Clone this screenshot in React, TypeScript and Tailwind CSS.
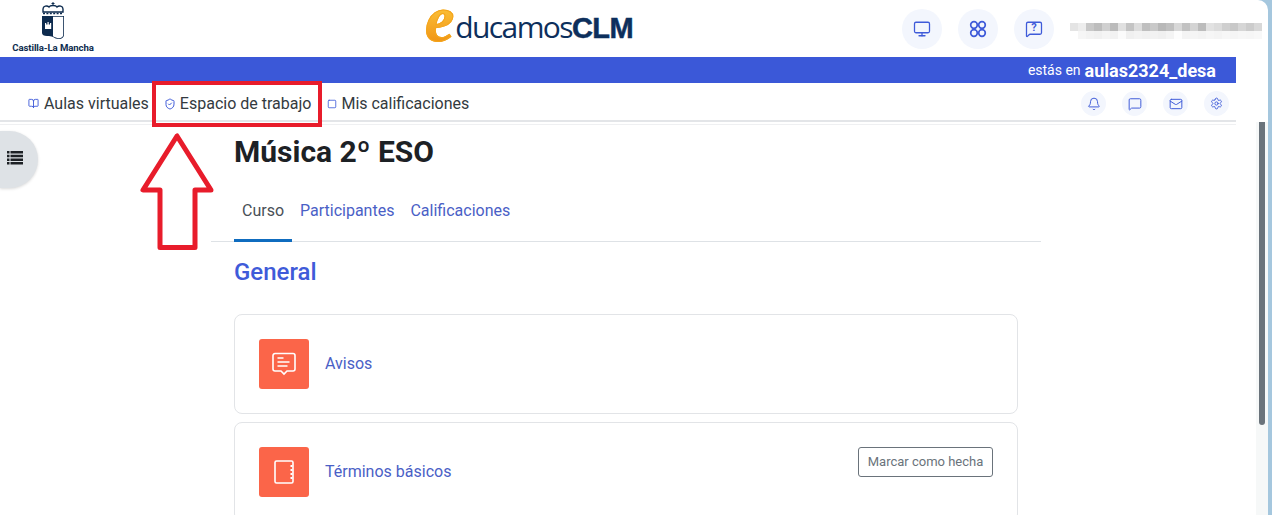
import React from 'react';
import { Bell, BookOpen, Mail, MessageSquare, Monitor, Settings, ShieldCheck, Square } from 'lucide-react';

const blurTop = ['#e4e4e4', '#ededed', '#c8c8c8', '#bdbdbd', '#d0d0d0', '#bbbbbb', '#e0e0e0', '#c4c4c4', '#dddddd', '#bfbfbf', '#c9c9c9', '#b8b8b8', '#c0c0c0', '#d8d8d8', '#c2c2c2', '#d4d4d4', '#bcbcbc', '#e2e2e2', '#dcdcdc', '#cfcfcf', '#c8c8c8', '#d6d6d6', '#cccccc', '#d8d8d8'];
const blurBottom = ['#f6f6f6', '#f3f3f3', '#f1f1f1', '#f5f5f5', '#f2f2f2', '#fbfbfb', '#f0f0f0', '#f3f3f3', '#f1f1f1', '#f2f2f2', '#f0f0f0', '#f4f4f4', '#fdfdfd', '#f4f4f4', '#f5f5f5', '#f3f3f3', '#f6f6f6', '#f4f4f4', '#f7f7f7', '#f5f5f5', '#f7f7f7', '#f6f6f6', '#f8f8f8'];

const CoatOfArms = () => <svg width="30" height="40" viewBox="0 0 30 40" fill="none">
    <path d="M15 0v3M13.5 1.5h3" stroke="#0d2b4e" strokeWidth="1" />
    <path d="M5 7c0-3 4-4 6-2 1-2 7-2 8 0 2-2 6-1 6 2v3H5z" fill="#fff" stroke="#0d2b4e" strokeWidth="1.4" />
    <path d="M5 11.5h20" stroke="#0d2b4e" strokeWidth="1.6" strokeDasharray="2 1.4" />
    <path d="M4 14h22v19c0 2-2 4-5 4-3 0-4-1-6-2-2-1-3-1-6-1-3 0-5-1-5-3z" fill="#0d2b4e" />
    <path d="M15 14.8h10.2V33c0 2-2 3.2-4.4 3.2-2 0-4-1-5.8-1.9z" fill="#fff" />
    <path d="M7 27v-6h1.2v1.5h1.3V20h1.2v2.5H12V21h1.2v6z" fill="#fff" />
  </svg>;

const FourRings = () => <svg width="18" height="18" viewBox="0 0 18 18" fill="none" stroke="#3f5bd9" strokeWidth="1.7">
    <circle cx="5" cy="5" r="3.3" />
    <circle cx="13" cy="5" r="3.3" />
    <circle cx="5" cy="13" r="3.3" />
    <circle cx="13" cy="13" r="3.3" />
  </svg>;

const ListIcon = () => <svg width="16" height="14" viewBox="0 0 16 14" fill="#1d2125">
    <path d="M0 0h2.500v2.500H0zM3.500 0H16v2.500H3.500zM0 3.700h2.500v2.500H0zM3.500 3.700H16v2.500H3.500zM0 7.400h2.500v2.500H0zM3.500 7.400H16v2.500H3.500zM0 11.100h2.500v2.500H0zM3.500 11.100H16v2.500H3.500z" />
  </svg>;

const TopButton = ({ children }: { children: React.ReactNode }) => <div className="w-10 h-10 rounded-full bg-[#f3f6fd] flex items-center justify-center text-[#3f5bd9]">
    {children}
  </div>;

const SmallButton = ({ children }: { children: React.ReactNode }) => <div className="w-[25px] h-[25px] rounded-full bg-[#f3f6fd] flex items-center justify-center text-[#3f5bd9]">
    {children}
  </div>;

const Card = ({ icon, label, action }: { icon: React.ReactNode; label: string; action?: boolean }) => <div className="h-[100px] shrink-0 border border-[#e2e4e7] rounded-lg pl-6 pr-6 flex items-center gap-4 relative">
    <div className="w-[50px] h-[50px] rounded-[3px] bg-[#fb6549] flex items-center justify-center shrink-0">{icon}</div>
    <a className="text-base text-[#4a60c6]">{label}</a>
    {action && <button className="ml-auto self-start mt-6 h-[30px] w-[135px] border border-[#6a737b] rounded-[3px] text-[13px] text-[#6a737b] text-center">Marcar como hecha</button>}
  </div>;

const App = () => {
  return <div className="relative w-[1272px] h-[515px] overflow-hidden bg-[#a5c7de] pr-1 pt-0 font-['Roboto',sans-serif]">
      <div className="h-full bg-white rounded-tr-[10px] flex flex-col overflow-hidden">
        {/* Top header */}
        <header className="relative h-[57px] shrink-0 flex items-center">
          <div className="w-[106px] flex flex-col items-center shrink-0">
            <CoatOfArms />
            <span className="text-[9.6px] leading-[11px] font-bold text-[#0d2b4e] tracking-[-0.1px] mb-[2px]">Castilla-La Mancha</span>
          </div>
          <div className="ml-[319px] self-start flex items-baseline w-[212px] h-[44px] shrink-0">
            <span className="text-[66px] leading-[32px] pb-[12px] pr-[3px] -mr-[2px] font-black italic font-['Liberation_Serif',serif] text-transparent bg-clip-text bg-gradient-to-b from-[#fcc53a] to-[#ee8f0c] [-webkit-text-stroke:1px_#f4a51c] translate-y-[3px]">e</span>
            <span className="text-[30px] leading-[44px] text-[#0d2f5c] font-['Open_Sans',sans-serif] tracking-[-1.6px]">ducamos</span>
            <span className="text-[29px] leading-[44px] text-[#0d2f5c] font-black font-['Liberation_Sans',sans-serif] tracking-[-0.6px] [-webkit-text-stroke:0.5px_#0d2f5c]">CLM</span>
          </div>
          <div className="ml-[265px] flex gap-4">
            <TopButton><Monitor size={18} strokeWidth={1.7} /></TopButton>
            <TopButton><FourRings /></TopButton>
            <TopButton>
              <div className="relative w-[18px] h-[18px]">
                <MessageSquare size={18} strokeWidth={1.7} />
                <span className="absolute inset-0 text-[11px] leading-[15px] font-bold text-center">?</span>
              </div>
            </TopButton>
          </div>
          <div className="ml-[16px] mt-[5px] flex flex-col blur-[0.6px]">
            <div className="flex h-[8px]">
              {blurTop.map((c, i) => <div key={i} className="w-2 h-full" style={{ backgroundColor: c }} />)}
            </div>
            <div className="flex h-[8px] ml-2">
              {blurBottom.map((c, i) => <div key={i} className="w-2 h-full" style={{ backgroundColor: c }} />)}
            </div>
          </div>
        </header>

        {/* Blue bar */}
        <div className="h-[26px] shrink-0 mr-[32px] bg-[#3b58d8] flex items-center justify-end pr-5 text-white">
          <span className="text-[14px] mr-[4px]">estás en</span>
          <span className="text-[18px] font-bold">aulas2324_desa</span>
        </div>

        {/* Nav bar */}
        <nav className="h-[39px] shrink-0 mr-[32px] border-b-2 border-[#e3e5e8] flex items-center pl-[28px] pr-[7px] pt-1 text-base text-[#333a40]">
          <BookOpen size={11} className="text-[#3f5bd9] mr-[5px]" />
          <span>Aulas virtuales</span>
          <ShieldCheck size={12} className="text-[#3f5bd9] ml-[15px] mr-[4px]" />
          <span>Espacio de trabajo</span>
          <Square size={10} className="text-[#3f5bd9] ml-[16px] mr-[4px]" />
          <span>Mis calificaciones</span>
          <div className="ml-auto flex gap-4">
            <SmallButton><Bell size={14} strokeWidth={1.7} /></SmallButton>
            <SmallButton><MessageSquare size={14} strokeWidth={1.7} /></SmallButton>
            <SmallButton><Mail size={14} strokeWidth={1.7} /></SmallButton>
            <SmallButton><Settings size={13} strokeWidth={1.7} /></SmallButton>
          </div>
        </nav>

        {/* Body */}
        <div className="flex-1 flex min-h-0">
          <main className="flex-1 min-w-0 overflow-hidden">
            <div className="mt-[2px] w-[1236px] border-t border-[#eff0f2] pl-[211px]">
              <div className="w-[830px]">
                <h1 className="pl-[23px] pt-[7px] text-[30px] leading-[40px] font-bold text-[#1d2125]">Música 2º ESO</h1>
                <div className="mt-[19px] h-[51px] border-b border-[#dee2e6] pl-[23px] flex text-base">
                  <a className="w-[58px] text-center border-b-[3px] border-[#0f6cbf] text-[#495057] pt-[8px] h-[51px]">Curso</a>
                  <a className="ml-2 pt-[8px] text-[#4a60c6]">Participantes</a>
                  <a className="ml-4 pt-[8px] text-[#4a60c6]">Calificaciones</a>
                </div>
                <h2 className="pl-[23px] mt-4 text-2xl leading-[29px] font-medium text-[#3f5bd9]">General</h2>
                <div className="ml-[23px] w-[784px] mt-[27px] flex flex-col gap-2">
                  <Card label="Avisos" icon={<svg width="24" height="24" viewBox="0 0 24 24" fill="none" stroke="#fff" strokeWidth="1.6">
                        <path d="M3 1.500h18a2 2 0 0 1 2 2V17a2 2 0 0 1-2 2h-6l-3 3-3-3H3a2 2 0 0 1-2-2V3.500a2 2 0 0 1 2-2z" />
                        <path d="M5.500 6h6M5.500 10h12M5.500 14h10" />
                      </svg>} />
                  <Card label="Términos básicos" action icon={<svg width="20" height="24" viewBox="0 0 20 24" fill="none" stroke="#fff" strokeWidth="1.6">
                        <rect x="1" y="1" width="18" height="22" rx="1.500" />
                        <path d="M16.500 6h2M16.500 10h2M16.500 14h2M16.500 18h2" strokeWidth="2" />
                      </svg>} />
                </div>
              </div>
            </div>
          </main>
          {/* Scrollbar */}
          <div className="w-[12px] shrink-0 bg-[#f6f8f8] pl-[3px] pr-[3px]">
            <div className="h-[303px] rounded-b-full bg-[#6a737b]" />
          </div>
        </div>
      </div>

      {/* Sidebar toggle */}
      <div className="absolute left-0 top-[131px] w-[38px] h-[57px] rounded-r-full bg-[#dee2e6] shadow-[0_1px_3px_rgba(0,0,0,0.15)] flex items-center pl-[7px] pb-[3px]">
        <ListIcon />
      </div>

      {/* Annotation */}
      <div className="absolute left-[152px] top-[81px] w-[170px] h-[46px] border-4 border-[#e81c2b]" />
      <svg className="absolute left-[138px] top-[130px]" width="80" height="122" viewBox="0 0 80 122" fill="#fff" stroke="#e81c2b" strokeWidth="5" strokeLinejoin="round">
        <path d="M39 6 5 60H22v57.500h35V60h16z" />
      </svg>
    </div>;
};
export default App;
